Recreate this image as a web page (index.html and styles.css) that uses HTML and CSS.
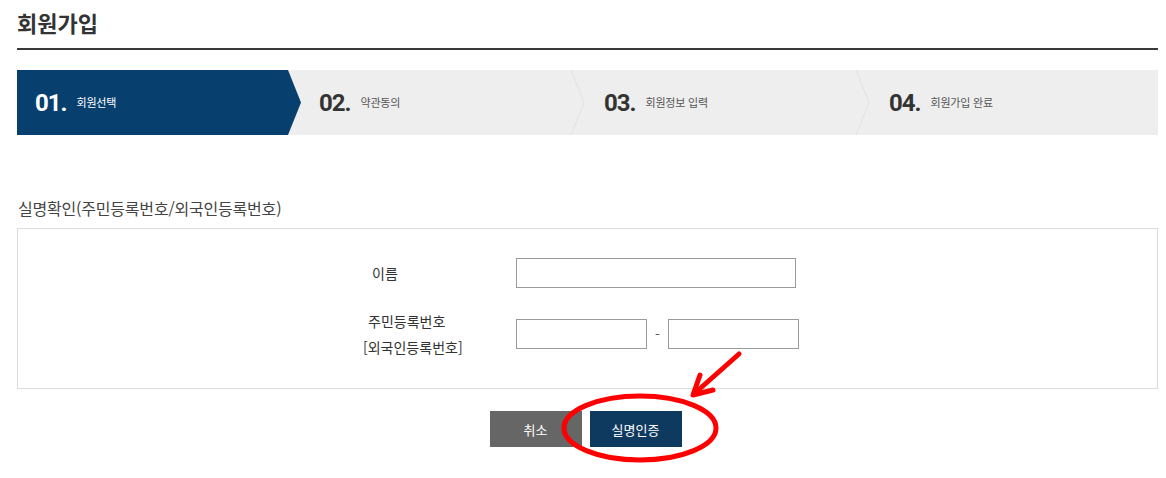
FILE: index.html
```html
<!DOCTYPE html>
<html lang="ko">
<head>
    <meta charset="UTF-8">
    <meta name="viewport" content="width=device-width, initial-scale=1.0">
    <title>회원가입</title>
    <link rel="stylesheet" href="styles.css">
</head>
<body>
    <div class="page">
        <h1 class="page-title">회원가입</h1>

        <ol class="steps">
            <li class="step active"><span class="num">01.</span><span class="label">회원선택</span></li>
            <li class="step"><span class="num">02.</span><span class="label">약관동의</span>
                <svg class="sep" width="16" height="65" viewBox="0 0 16 65"><polyline points="1,0 14,32.5 1,65" fill="none" stroke="#e2e2e2" stroke-width="1"/></svg>
            </li>
            <li class="step"><span class="num">03.</span><span class="label">회원정보 입력</span>
                <svg class="sep" width="16" height="65" viewBox="0 0 16 65"><polyline points="1,0 14,32.5 1,65" fill="none" stroke="#e2e2e2" stroke-width="1"/></svg>
            </li>
            <li class="step"><span class="num">04.</span><span class="label">회원가입 완료</span></li>
        </ol>

        <h2 class="section-title">실명확인(주민등록번호/외국인등록번호)</h2>

        <div class="form-box">
            <div class="form-grid">
                <div class="form-label name-label">이름</div>
                <div class="form-field"><input type="text" class="input-name"></div>

                <div class="form-label jumin-label">
                    <span class="line1">주민등록번호</span>
                    <span class="line2">[외국인등록번호]</span>
                </div>
                <div class="form-field">
                    <input type="text" class="input-short">
                    <span class="dash">-</span>
                    <input type="password" class="input-short">
                </div>
            </div>
        </div>

        <div class="btn-row">
            <button class="btn btn-cancel">취소</button>
            <button class="btn btn-confirm">실명인증</button>
        </div>
    </div>

    <svg class="annotation" width="1166" height="478" viewBox="0 0 1166 478">
        <ellipse cx="640" cy="428" rx="76" ry="32" fill="none" stroke="#ff0000" stroke-width="5"/>
        <line x1="739" y1="354" x2="695" y2="393" stroke="#ff0000" stroke-width="5" stroke-linecap="round"/>
        <polyline points="700,375 693,395 713,390" fill="none" stroke="#ff0000" stroke-width="5" stroke-linecap="round" stroke-linejoin="round"/>
    </svg>
</body>
</html>
```

FILE: styles.css
```css
body {
    margin: 0;
    font-family: "Noto Sans CJK KR", "Noto Sans", sans-serif;
    color: #333;
    background: #fff;
}
.page {
    width: 1141px;
    margin-left: 17px;
}
.page-title {
    margin: 0;
    padding: 7px 0 11px;
    font-size: 22px;
    line-height: 30px;
    font-weight: bold;
    color: #333;
    border-bottom: 2px solid #3a3a3a;
}

/* steps */
.steps {
    list-style: none;
    margin: 20px 0 0;
    padding: 0;
    display: flex;
    height: 65px;
    background: #eeeeee;
}
.step {
    position: relative;
    flex: 0 0 285px;
    display: flex;
    align-items: center;
    padding-left: 18px;
    box-sizing: border-box;
    color: #333;
}
.step.active {
    background: #07406f;
    color: #fff;
    flex-basis: 284px;
    clip-path: polygon(0 0, 271px 0, 284px 50%, 271px 100%, 0 100%);
}
.step .num {
    font-family: Roboto, "Liberation Sans", sans-serif;
    font-weight: bold;
    font-size: 24px;
    letter-spacing: -1px;
    line-height: 1;
}
.step .label {
    margin-left: 10px;
    margin-bottom: 2px;
    font-size: 11px;
    letter-spacing: -0.2px;
    color: #555;
}
.step.active .label {
    color: #fff;
}
.step .sep {
    position: absolute;
    right: 0;
    top: 0;
}

/* form */
.section-title {
    margin: 63px 0 10px 1px;
    font-size: 16px;
    line-height: 20px;
    font-weight: normal;
    color: #444;
    letter-spacing: -0.2px;
}
.form-box {
    border: 1px solid #dcdcdc;
    padding: 29px 0 28px;
    display: flex;
    justify-content: center;
}
.form-grid {
    display: grid;
    grid-template-columns: 153px 296px;
    row-gap: 20px;
    align-items: center;
    font-size: 14px;
    color: #333;
}
.form-label {
    display: flex;
    flex-direction: column;
    line-height: 26px;
}
.name-label {
    padding-left: 9px;
}
.jumin-label .line1 {
    padding-left: 5px;
}
.form-field {
    display: flex;
    align-items: center;
}
.form-field input {
    height: 30px;
    box-sizing: border-box;
    border: 1px solid #9a9a9a;
    padding: 0 6px;
    margin: 0;
    font-size: 14px;
}
.input-name {
    width: 280px;
}
.input-short {
    width: 131px;
}
.dash {
    width: 21px;
    text-align: center;
    color: #555;
}

/* buttons */
.btn-row {
    display: flex;
    justify-content: center;
    gap: 8px;
    margin-top: 22px;
    padding-right: 4px;
}
.btn {
    width: 92px;
    height: 36px;
    border: none;
    color: #fff;
    font-family: "Noto Sans CJK KR", sans-serif;
    font-size: 13px;
    cursor: pointer;
}
.btn-cancel {
    background: #666;
}
.btn-confirm {
    background: #0f3a60;
}

.annotation {
    position: absolute;
    top: 0;
    left: 0;
    pointer-events: none;
}
```
